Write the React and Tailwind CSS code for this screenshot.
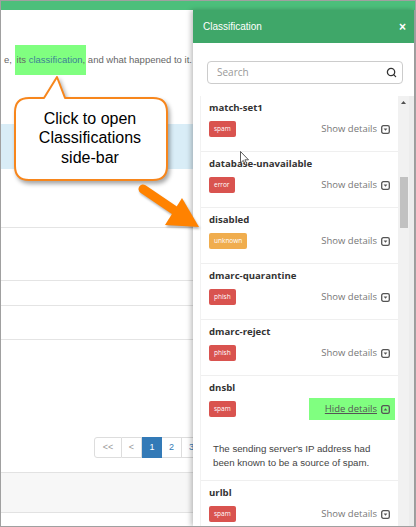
import { Search } from 'lucide-react'

const ITEMS = [
  { name: 'match-set1', tag: 'spam' },
  { name: 'database-unavailable', tag: 'error' },
  { name: 'disabled', tag: 'unknown' },
  { name: 'dmarc-quarantine', tag: 'phish' },
  { name: 'dmarc-reject', tag: 'phish' },
  {
    name: 'dnsbl',
    tag: 'spam',
    open: true,
    details: "The sending server's IP address had been known to be a source of spam.",
  },
  { name: 'urlbl', tag: 'spam' },
]

function CaretBox({ up }) {
  return (
    <svg width="9" height="9" viewBox="0 0 9 9" className="shrink-0">
      <rect x="0.7" y="0.7" width="7.6" height="7.6" rx="1.6" fill="none" stroke="#555" strokeWidth="1.3" />
      {up ? (
        <path d="M2.6 5.6 L6.4 5.6 L4.5 3.2 Z" fill="#555" />
      ) : (
        <path d="M2.6 3.4 L6.4 3.4 L4.5 5.8 Z" fill="#555" />
      )}
    </svg>
  )
}

function Badge({ tag }) {
  const color = tag === 'unknown' ? 'bg-[#f0ad4e]' : 'bg-[#d9534f]'
  return (
    <span className={`${color} h-[16px] px-[5px] flex items-center rounded-[2px] text-white text-[6.5px] font-['Open_Sans',sans-serif]`}>
      {tag}
    </span>
  )
}

function Item({ item }) {
  return (
    <div className="pt-[5px] pb-[14px] px-[8px] border-b border-[#efefef] bg-white">
      <div className="leading-[14px] text-[9.6px] font-bold text-[#333] font-['Open_Sans',sans-serif]">{item.name}</div>
      <div className="mt-[6px] h-[16px] flex items-center justify-between">
        <Badge tag={item.tag} />
        {item.open ? (
          <span className="-mr-[5px] h-[22px] pl-[16px] pr-[5px] bg-[#80ff80] flex items-center gap-[4px] text-[9.5px] text-[#555] underline font-['Open_Sans',sans-serif]">
            Hide details <CaretBox up />
          </span>
        ) : (
          <span className="flex items-center gap-[4px] text-[9.5px] text-[#777] font-['Open_Sans',sans-serif]">
            Show details <CaretBox />
          </span>
        )}
      </div>
      {item.details && (
        <p className="mt-[25px] -mb-[4px] pl-[4px] pr-[10px] text-[9.7px] leading-[14px] text-[#444] font-['Liberation_Sans',Arial,sans-serif]">
          {item.details}
        </p>
      )}
    </div>
  )
}

function Page() {
  return (
    <div className="w-[192px] shrink-0 overflow-hidden flex flex-col bg-white font-['Liberation_Sans',Arial,sans-serif]">
      <div className="h-[35px]" />
      <div className="h-[30px] whitespace-nowrap text-[9.5px] text-[#666] leading-[30px] pl-[3px]">
        e,{' '}
        <span className="inline-block bg-[#80ff80] h-[30px] pl-[2px] pr-[1px]">
          its <span className="text-[#3d7f95]">classification</span>,
        </span>
        <span className="-ml-[1px]"> and what happened to it.</span>
      </div>
      <div className="h-[49px]" />
      <div className="h-[45px] bg-[#d9edf7]" />
      <div className="h-[58px]" />
      <div className="h-[53px] border-t border-[#e4e4e4]" />
      <div className="h-[25px] border-t border-[#e4e4e4]" />
      <div className="h-[34px] border-t border-[#e4e4e4]" />
      <div className="h-[98px] border-t border-[#e4e4e4]" />
      <div className="h-[21px] pl-[93px] flex text-[9px] whitespace-nowrap">
        <span className="w-[28px] shrink-0 border border-[#ddd] rounded-l-[3px] flex items-center justify-center text-[#999]">&lt;&lt;</span>
        <span className="w-[20px] shrink-0 border-y border-r border-[#ddd] flex items-center justify-center text-[#999]">&lt;</span>
        <span className="w-[20px] shrink-0 bg-[#337ab7] border-y border-[#337ab7] flex items-center justify-center text-white">1</span>
        <span className="w-[20px] shrink-0 border-y border-r border-[#ddd] flex items-center justify-center text-[#337ab7]">2</span>
        <span className="w-[20px] shrink-0 border-y border-r border-[#ddd] flex items-center justify-center text-[#337ab7]">3</span>
      </div>
      <div className="h-[14px]" />
      <div className="h-[41px] bg-[#f7f7f7] border-y border-[#e2e2e2]" />
    </div>
  )
}

function Sidebar() {
  return (
    <div className="flex-1 min-w-0 flex flex-col bg-white shadow-[-2px_0_5px_rgba(0,0,0,0.25)] border-r border-[#9c9c9c] z-10">
      <div className="h-[33px] shrink-0 bg-[#3fa769] flex items-center justify-between pl-[10px] pr-[8px] text-white">
        <span className="text-[10px] font-['Liberation_Sans',Arial,sans-serif]">Classification</span>
        <span className="text-[12px] font-bold leading-none font-['Liberation_Sans',Arial,sans-serif]">×</span>
      </div>
      <div className="mt-[18px] ml-[14px] mr-[11px] h-[23px] shrink-0 border border-[#ccc] rounded-[4px] flex items-center justify-between pl-[9px] pr-[5px]">
        <span className="text-[10px] text-[#999] font-['Open_Sans',sans-serif]">Search</span>
        <Search size={11} strokeWidth={2.8} color="#333" />
      </div>
      <div className="mt-[12px] flex-1 min-h-0 flex">
        <div className="w-[7px] shrink-0" />
        <div className="flex-1 min-w-0 overflow-hidden border-l border-[#f2f2f2]">
          {ITEMS.map(item => (
            <Item key={item.name} item={item} />
          ))}
        </div>
        <div className="w-[11px] shrink-0 bg-[#f1f1f1] flex flex-col items-center">
          <div className="h-[81px] pt-[5px]">
            <svg width="5" height="3" viewBox="0 0 5 3">
              <path d="M0 3 L5 3 L2.5 0 Z" fill="#505050" />
            </svg>
          </div>
          <div className="h-[51px] w-[8px] bg-[#c1c1c1]" />
        </div>
        <div className="w-[5px] shrink-0 bg-[#ececec]" />
      </div>
    </div>
  )
}

export default function App() {
  return (
    <div className="relative w-[416px] h-[527px] overflow-hidden border border-[#a0a0a0] bg-white flex flex-col">
      <div className="h-[9px] shrink-0 bg-[#4cbf7b]" />
      <div className="flex-1 min-h-0 flex">
        <Page />
        <Sidebar />
      </div>

      {/* callout */}
      <svg className="absolute left-0 top-0 drop-shadow-[2px_3px_2px_rgba(0,0,0,0.35)] z-20" width="200" height="240" viewBox="-1 -1 200 240">
        <path
          d="M27 96 L42 96 L55 75 L63 96 L151 96 Q165 96 165 110 L165 164 Q165 178 151 178 L27 178 Q13 178 13 164 L13 110 Q13 96 27 96 Z"
          fill="white"
          stroke="#f7861c"
          strokeWidth="2"
          strokeLinejoin="round"
        />
      </svg>
      <div className="absolute left-[13px] top-[96px] w-[152px] h-[82px] z-20 flex flex-col items-center justify-center text-[16px] leading-[19.5px] text-black font-['Liberation_Sans',Arial,sans-serif]">
        <span>Click to open</span>
        <span>Classifications</span>
        <span>side-bar</span>
      </div>

      {/* arrow */}
      <svg className="absolute left-0 top-0 z-20 drop-shadow-[1px_2px_1px_rgba(0,0,0,0.3)]" width="210" height="240" viewBox="-1 -1 210 240">
        <line x1="141" y1="187" x2="172" y2="208" stroke="#ff8200" strokeWidth="9" strokeLinecap="round" />
        <path d="M180 196 L197 225 L163 223 Z" fill="#ff8200" />
      </svg>

      {/* mouse cursor */}
      <svg className="absolute left-[239px] top-[150px] z-30" width="10" height="16" viewBox="0 0 10 16">
        <path d="M0.5 0.5 L0.5 12 L3.3 9.4 L5.4 14 L7 13.3 L4.9 8.8 L8.5 8.8 Z" fill="white" stroke="#333" strokeWidth="0.8" />
      </svg>
    </div>
  )
}
